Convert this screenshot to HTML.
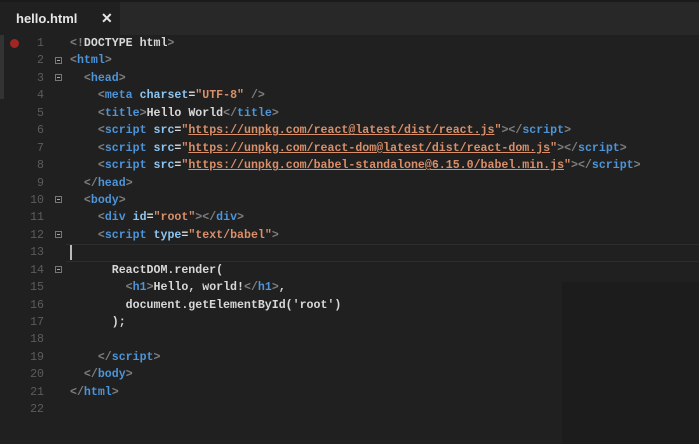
<!DOCTYPE html>
<html><head><meta charset="utf-8"><style>
body{margin:0;width:699px;height:444px;background:#202020;overflow:hidden;position:relative;font-family:"Liberation Mono",monospace}
.bar{position:absolute;left:0;top:0;width:699px;height:35px;background:#282828;border-top:2px solid #1a1a1a;box-sizing:border-box}
.tab{position:absolute;left:0;top:2px;width:120px;height:33px;background:#202020;font-family:"Liberation Sans",sans-serif;font-weight:bold;font-size:13px;color:#e6e6e6}
.tab .n{position:absolute;left:16px;top:9px}
.tab .x{position:absolute;left:101px;top:8px;font-size:14px}
.dark{position:absolute;left:562px;top:282px;width:137px;height:162px;background:#1c1c1c}
.cur{position:absolute;left:66px;top:244px;width:633px;height:16px;border-top:1px solid #2d2d2d;border-bottom:1px solid #2d2d2d}
.caret{position:absolute;left:70px;top:245px;width:2px;height:15px;background:#bbb}
.ln{position:absolute;left:0;width:44px;text-align:right;color:#5c5c5c;font-size:11.6px}
.code{position:absolute;left:70px;white-space:pre;font-size:11.6px;font-weight:bold;color:#d8d8d8}
.fold{position:absolute;left:55px;width:7px;height:7px;border:1px solid #777;box-sizing:border-box}
.fold:after{content:"";position:absolute;left:1px;top:2px;width:3px;height:1px;background:#aaa}
.dot{position:absolute;left:10px;top:39px;width:9px;height:9px;border-radius:50%;background:#a02525}
.sb{position:absolute;left:0;top:35px;width:4px;height:64px;background:#333}
.p{color:#7e7e7e}.t{color:#4d94d8}.a{color:#8ec5f0}.s{color:#d98f6a}.u{color:#d98f6a;text-decoration:underline}
</style></head><body>
<div class="bar"></div>
<div class="tab"><span class="n">hello.html</span><span class="x">✕</span></div>
<div class="sb"></div>
<div class="dark"></div>
<div class="cur"></div>
<div class="caret"></div>
<div class="dot"></div>
<div id="g"></div>
<div class="ln" style="top:35px;line-height:17.43px">1<br>2<br>3<br>4<br>5<br>6<br>7<br>8<br>9<br>10<br>11<br>12<br>13<br>14<br>15<br>16<br>17<br>18<br>19<br>20<br>21<br>22</div>
<div class="fold" style="top:57px"></div>
<div class="fold" style="top:74px"></div>
<div class="fold" style="top:196px"></div>
<div class="fold" style="top:231px"></div>
<div class="fold" style="top:266px"></div>
<div class="code" style="top:35px;line-height:17.43px"><span class="p">&lt;!</span>DOCTYPE html<span class="p">&gt;</span>
<span class="p">&lt;</span><span class="t">html</span><span class="p">&gt;</span>
  <span class="p">&lt;</span><span class="t">head</span><span class="p">&gt;</span>
    <span class="p">&lt;</span><span class="t">meta</span> <span class="a">charset</span>=<span class="s">"UTF-8"</span> <span class="p">/&gt;</span>
    <span class="p">&lt;</span><span class="t">title</span><span class="p">&gt;</span>Hello World<span class="p">&lt;/</span><span class="t">title</span><span class="p">&gt;</span>
    <span class="p">&lt;</span><span class="t">script</span> <span class="a">src</span>=<span class="s">"</span><span class="u">https://unpkg.com/react@latest/dist/react.js</span><span class="s">"</span><span class="p">&gt;&lt;/</span><span class="t">script</span><span class="p">&gt;</span>
    <span class="p">&lt;</span><span class="t">script</span> <span class="a">src</span>=<span class="s">"</span><span class="u">https://unpkg.com/react-dom@latest/dist/react-dom.js</span><span class="s">"</span><span class="p">&gt;&lt;/</span><span class="t">script</span><span class="p">&gt;</span>
    <span class="p">&lt;</span><span class="t">script</span> <span class="a">src</span>=<span class="s">"</span><span class="u">https://unpkg.com/babel-standalone@6.15.0/babel.min.js</span><span class="s">"</span><span class="p">&gt;&lt;/</span><span class="t">script</span><span class="p">&gt;</span>
  <span class="p">&lt;/</span><span class="t">head</span><span class="p">&gt;</span>
  <span class="p">&lt;</span><span class="t">body</span><span class="p">&gt;</span>
    <span class="p">&lt;</span><span class="t">div</span> <span class="a">id</span>=<span class="s">"root"</span><span class="p">&gt;&lt;/</span><span class="t">div</span><span class="p">&gt;</span>
    <span class="p">&lt;</span><span class="t">script</span> <span class="a">type</span>=<span class="s">"text/babel"</span><span class="p">&gt;</span>

      ReactDOM.render(
        <span class="p">&lt;</span><span class="t">h1</span><span class="p">&gt;</span>Hello, world!<span class="p">&lt;/</span><span class="t">h1</span><span class="p">&gt;</span>,
        document.getElementById('root')
      );

    <span class="p">&lt;/</span><span class="t">script</span><span class="p">&gt;</span>
  <span class="p">&lt;/</span><span class="t">body</span><span class="p">&gt;</span>
<span class="p">&lt;/</span><span class="t">html</span><span class="p">&gt;</span>
</div>
</body></html>
